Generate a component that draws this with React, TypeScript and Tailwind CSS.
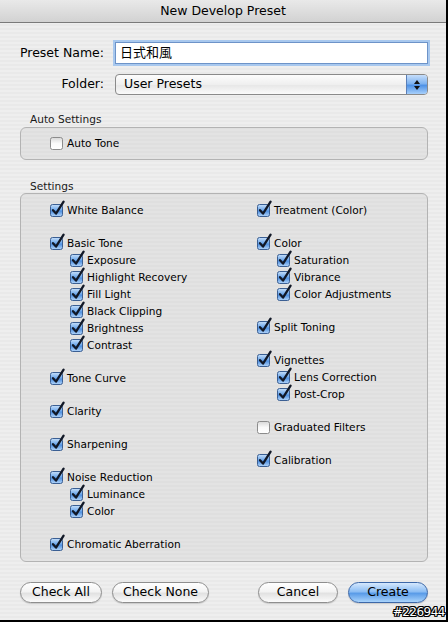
import React from 'react';

const FONT = { fontFamily: '"DejaVu Sans", "Noto Sans CJK JP", sans-serif' };

function Box({ checked }: { checked: boolean }) {
  return (
    <span className="relative inline-block w-[13px] h-[13px] shrink-0">
      <svg width="17" height="17" viewBox="0 0 17 17" className="absolute left-0 top-[-4px] overflow-visible">
        <defs>
          <linearGradient id="cbBlue" x1="0" y1="0" x2="0" y2="1">
            <stop offset="0" stopColor="#c8e0fa" />
            <stop offset="0.45" stopColor="#6fa9ec" />
            <stop offset="0.55" stopColor="#4f90e0" />
            <stop offset="1" stopColor="#b4d6fa" />
          </linearGradient>
          <linearGradient id="cbWhite" x1="0" y1="0" x2="0" y2="1">
            <stop offset="0" stopColor="#d8d8d8" />
            <stop offset="0.5" stopColor="#fafafa" />
            <stop offset="1" stopColor="#ffffff" />
          </linearGradient>
        </defs>
        <rect x="0.5" y="4.5" width="12" height="12" rx="2" fill={checked ? 'url(#cbBlue)' : 'url(#cbWhite)'} stroke={checked ? '#3b5f93' : '#8c8c8c'} />
        {checked && (
          <path d="M3 10.2 L6 13.6 L13.6 1.6" fill="none" stroke="#111827" strokeWidth="2.3" strokeLinecap="round" strokeLinejoin="round" />
        )}
      </svg>
    </span>
  );
}

function Row({ label, checked = true, sub = false }: { label: string; checked?: boolean; sub?: boolean }) {
  return (
    <div className={`flex items-center h-[17px] gap-[4px] ${sub ? 'pl-[20px]' : ''}`}>
      <Box checked={checked} />
      <span className="text-[10.6px] text-black whitespace-nowrap leading-none">{label}</span>
    </div>
  );
}

const LEFT: { label: string; subs?: string[] }[] = [
  { label: 'White Balance' },
  { label: 'Basic Tone', subs: ['Exposure', 'Highlight Recovery', 'Fill Light', 'Black Clipping', 'Brightness', 'Contrast'] },
  { label: 'Tone Curve' },
  { label: 'Clarity' },
  { label: 'Sharpening' },
  { label: 'Noise Reduction', subs: ['Luminance', 'Color'] },
  { label: 'Chromatic Aberration' },
];

const RIGHT: { label: string; subs?: string[]; off?: boolean }[] = [
  { label: 'Treatment (Color)' },
  { label: 'Color', subs: ['Saturation', 'Vibrance', 'Color Adjustments'] },
  { label: 'Split Toning' },
  { label: 'Vignettes', subs: ['Lens Correction', 'Post-Crop'] },
  { label: 'Graduated Filters', off: true },
  { label: 'Calibration' },
];

function Column({ groups }: { groups: { label: string; subs?: string[]; off?: boolean }[] }) {
  return (
    <div className="flex flex-col gap-[16px]">
      {groups.map(g => (
        <div key={g.label}>
          <Row label={g.label} checked={!g.off} />
          {g.subs?.map(s => <Row key={s} label={s} sub />)}
        </div>
      ))}
    </div>
  );
}

function Pill({ children, blue = false, w }: { children: React.ReactNode; blue?: boolean; w: string }) {
  return (
    <button
      className={`${w} h-[21px] rounded-full border text-[12.5px] leading-none text-black flex items-center justify-center ${
        blue
          ? 'border-[#3d68a8] bg-[linear-gradient(#d5e8fd_0%,#8dbef4_45%,#5a9ce8_55%,#a9d3fb_100%)]'
          : 'border-[#8e8e8e] bg-[linear-gradient(#ffffff_0%,#f3f3f3_45%,#e2e2e2_55%,#fbfbfb_100%)]'
      } shadow-[0_1px_1px_rgba(0,0,0,0.15)]`}
    >
      {children}
    </button>
  );
}

export default function App() {
  return (
    <div
      className="relative w-[448px] h-[622px] overflow-hidden border-r-2 border-b-2 border-black bg-[repeating-linear-gradient(0deg,#eeeeee_0px,#eeeeee_2px,#e9e9e9_2px,#e9e9e9_4px)]"
      style={FONT}
    >
      <div className="h-[23px] border-b border-[#7a7a7a] bg-[linear-gradient(#e9e9e9,#d2d2d2)] flex items-center justify-center text-[12.5px] text-black">
        New Develop Preset
      </div>

      <div className="mt-[19px] flex items-center">
        <div className="w-[104px] text-right text-[12.5px] text-black">Preset Name:</div>
        <div className="ml-[11px] w-[313px] h-[22px] bg-white border border-[#6d93c8] shadow-[0_0_0_2px_#a8c8ee] flex items-center pl-[4px] text-[13px] text-black">
          日式和風
        </div>
      </div>

      <div className="mt-[10px] flex items-center">
        <div className="w-[104px] text-right text-[12.5px] text-black">Folder:</div>
        <div className="ml-[11px] w-[313px] h-[21px] rounded-[4px] border border-[#8a8a8a] bg-[linear-gradient(#fdfdfd,#efefef_50%,#e6e6e6_51%,#fafafa)] flex items-center overflow-hidden">
          <span className="flex-1 pl-[8px] text-[12.5px] text-black">User Presets</span>
          <span className="w-[21px] h-full border-l border-[#5a7fb8] bg-[linear-gradient(#c6defb,#7fb3f0_45%,#4f92e6_55%,#a8d0fb)] flex flex-col items-center justify-center gap-[2px]">
            <svg width="6" height="4" viewBox="0 0 6 4"><path d="M3 0 L6 4 L0 4 Z" fill="#111" /></svg>
            <svg width="6" height="4" viewBox="0 0 6 4"><path d="M0 0 L6 0 L3 4 Z" fill="#111" /></svg>
          </span>
        </div>
      </div>

      <div className="mt-[17px] pl-[30px] h-[14px] leading-[14px] text-[10.6px] text-[#1a1a1a]">Auto Settings</div>
      <div className="mt-[1px] ml-[20px] w-[408px] h-[33px] rounded-[6px] border border-[#b3b3b3] bg-[repeating-linear-gradient(0deg,#e3e3e3_0px,#e3e3e3_2px,#dfdfdf_2px,#dfdfdf_4px)] flex items-center pl-[29px]">
        <Row label="Auto Tone" checked={false} />
      </div>

      <div className="mt-[19px] pl-[30px] h-[14px] leading-[14px] text-[10.6px] text-[#1a1a1a]">Settings</div>
      <div className="ml-[20px] w-[408px] h-[369px] rounded-[6px] border border-[#b3b3b3] bg-[repeating-linear-gradient(0deg,#e3e3e3_0px,#e3e3e3_2px,#dfdfdf_2px,#dfdfdf_4px)] pt-[8px] pl-[29px] grid grid-cols-[207px_1fr]">
        <Column groups={LEFT} />
        <Column groups={RIGHT} />
      </div>

      <div className="mt-[20px] ml-[20px] w-[408px] flex items-center">
        <Pill w="w-[82px]">Check All</Pill>
        <div className="ml-[10px]"><Pill w="w-[97px]">Check None</Pill></div>
        <div className="ml-auto flex gap-[10px]">
          <Pill w="w-[80px]">Cancel</Pill>
          <Pill w="w-[80px]" blue>Create</Pill>
        </div>
      </div>

      <div className="absolute right-[1px] bottom-[2px] text-[12px] text-white leading-none tracking-[-0.5px] [text-shadow:1px_0_0_#000,-1px_0_0_#000,0_1px_0_#000,0_-1px_0_#000,1px_1px_0_#000,-1px_-1px_0_#000,1px_-1px_0_#000,-1px_1px_0_#000]">
        #226944
      </div>
    </div>
  );
}
